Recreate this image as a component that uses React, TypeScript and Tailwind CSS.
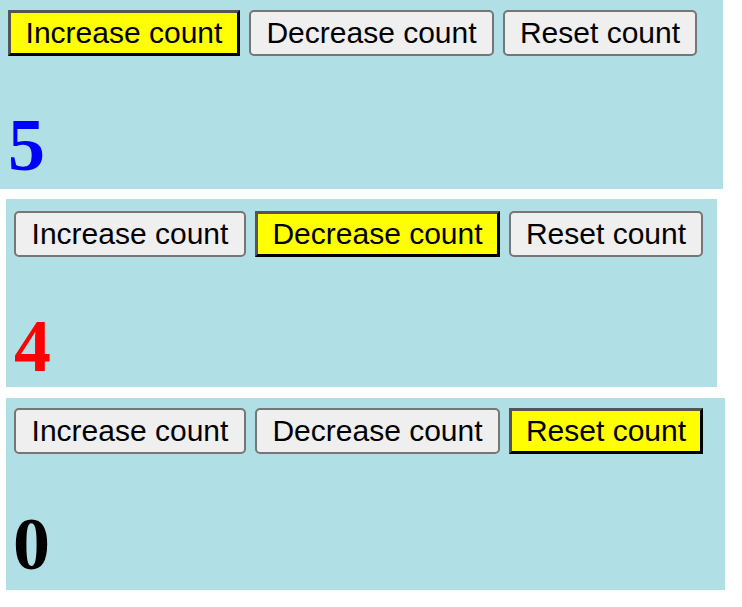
import { useState } from 'react'

type Action = 'inc' | 'dec' | 'reset'

type CounterProps = {
    start: number
    active: Action
    panelClass: string
    rowClass: string
    numClass: string
}

const buttons: { key: Action; label: string; width: string }[] = [
    { key: 'inc', label: 'Increase count', width: 'w-[232px]' },
    { key: 'dec', label: 'Decrease count', width: 'w-[245px]' },
    { key: 'reset', label: 'Reset count', width: 'w-[194px]' },
]

function Counter({ start, active, panelClass, rowClass, numClass }: CounterProps) {
    const [count, setCount] = useState(start)
    const [last, setLast] = useState<Action>(active)

    const handle = (key: Action) => {
        setLast(key)
        if (key === 'inc') setCount(c => c + 1)
        else if (key === 'dec') setCount(c => c - 1)
        else setCount(0)
    }

    // colour follows the last action, like the original demo
    const color = last === 'inc' ? 'text-[#0000ff]' : last === 'dec' ? 'text-[#ff0000]' : 'text-black'

    return (
        <div className={`bg-[#b0e0e6] flex flex-col ${panelClass}`}>
            <div className={`flex gap-[9px] ${rowClass}`}>
                {buttons.map(b => (
                    <button
                        key={b.key}
                        onClick={() => handle(b.key)}
                        className={`${b.width} h-[46px] flex items-center justify-center text-[30px] leading-none text-black font-['Liberation_Sans',Arial,sans-serif] ${last === b.key
                            ? 'bg-[#ffff00] border-[3px] border-t-[#555555] border-l-[#555555] border-r-black border-b-black'
                            : 'bg-[#efefef] border-2 border-[#767676] rounded-[5px]'
                        }`}
                    >
                        {b.label}
                    </button>
                ))}
            </div>
            <div className={`text-[74px] leading-none font-bold font-['Liberation_Serif','Times_New_Roman',serif] ${color} ${numClass}`}>
                {count}
            </div>
        </div>
    )
}

export default function App() {
    return (
        <div className="bg-white w-[742px] h-[607px] flex flex-col gap-[10px]">
            <Counter start={5} active="inc" panelClass="w-[723px] h-[189px]" rowClass="pt-[10px] pl-[8px]" numClass="mt-[52px] pl-[8px]" />
            <Counter start={4} active="dec" panelClass="ml-[6px] w-[711px] h-[188px]" rowClass="pt-[12px] pl-[8px]" numClass="mt-[52px] pl-[8px]" />
            <Counter start={0} active="reset" panelClass="mt-[1px] ml-[6px] w-[719px] h-[192px]" rowClass="pt-[10px] pl-[8px]" numClass="mt-[53px] pl-[7px]" />
        </div>
    )
}
